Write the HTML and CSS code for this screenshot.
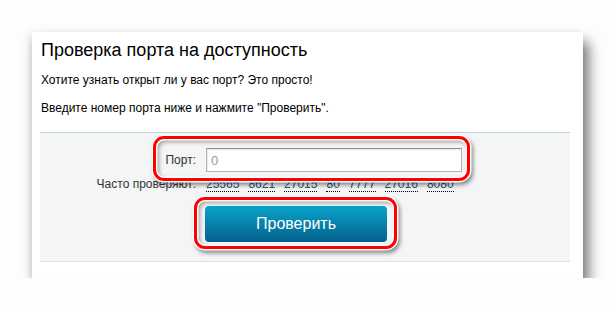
FILE: index.html
```html
<!DOCTYPE html>
<html>
<head>
    <title>Проверка порта на доступность</title>
    <link rel="stylesheet" href="styles.css">
</head>
<body>
    <div class="card">
        <h1>Проверка порта на доступность</h1>
        <p>Хотите узнать открыт ли у вас порт? Это просто!</p>
        <p>Введите номер порта ниже и нажмите "Проверить".</p>

        <form class="check-form">
            <label class="form-label" for="port">Порт:</label>
            <input class="port-input" type="text" id="port" value="0">

            <span class="form-label popular-label">Часто проверяют:</span>
            <div class="popular">
                <a href="#">25565</a>
                <a href="#">8621</a>
                <a href="#">27015</a>
                <a href="#">80</a>
                <a href="#">7777</a>
                <a href="#">27016</a>
                <a href="#">8080</a>
            </div>

            <div class="form-button">
                <button type="submit" class="check-btn">Проверить</button>
            </div>

            <!-- red marks over the screenshot -->
            <div class="mark mark-input"></div>
            <div class="mark mark-button"></div>
        </form>
    </div>
</body>
</html>
```

FILE: styles.css
```css
body {
    margin: 0;
    padding: 0;
    background-color: #fdfdfd;
    font-family: "Liberation Sans", Arial, sans-serif;
}

.card {
    width: 551px;
    margin: 32px 0 0 32px;
    padding: 7px 0 16px 0;
    box-sizing: border-box;
    background-color: #fff;
    box-shadow: 6px 10px 12px rgba(0, 0, 0, 0.5), -2px 2px 8px rgba(0, 0, 0, 0.12);
}

h1 {
    margin: 0 0 12px 9px;
    font-size: 18px;
    line-height: 22px;
    font-weight: normal;
    color: #000;
}

p {
    margin: 0 0 13px 9px;
    font-size: 12px;
    line-height: 15px;
    color: #000;
}

.check-form {
    position: relative;
    display: grid;
    grid-template-columns: 156px 1fr;
    column-gap: 10px;
    align-items: center;
    margin: 16px 13px 0 8px;
    padding: 15px 0 19px 0;
    background-color: #f3f5f6;
    border-top: 1px solid #c5d1d5;
    border-bottom: 1px solid #dce5e5;
}

.form-label {
    text-align: right;
    font-size: 12px;
    line-height: 15px;
    color: #333;
}

.port-input {
    width: 256px;
    height: 24px;
    box-sizing: border-box;
    padding: 0 4px;
    border: 1px solid #b3b3b3;
    border-top-color: #8f8f8f;
    box-shadow: inset 1px 1px 2px rgba(0, 0, 0, 0.1);
    font-family: "Liberation Sans", Arial, sans-serif;
    font-size: 13px;
    color: #999;
    background-color: #fff;
}

.popular-label,
.popular {
    margin-top: 5px;
}

.popular {
    display: flex;
    gap: 9px;
    font-size: 12px;
    line-height: 14px;
}

.popular a {
    color: #22527f;
    text-decoration: none;
    border-bottom: 1px dotted #000;
}

.form-button {
    grid-column: 2;
    margin-top: 14px;
    margin-left: -1px;
}

.check-btn {
    width: 182px;
    height: 36px;
    border: none;
    border-radius: 4px;
    background: linear-gradient(#0aa4ca, #03608c);
    color: #fff;
    font-family: "Liberation Sans", Arial, sans-serif;
    font-size: 16px;
    cursor: pointer;
}

.mark {
    position: absolute;
    box-sizing: border-box;
    border: 3px solid #f00;
    border-radius: 11px;
    box-shadow: 0 0 0 1.5px #fff, 2px 3px 4px 1px rgba(0, 0, 0, 0.45),
        inset 0 0 0 1.5px #fff, inset 2px 2px 4px 1px rgba(0, 0, 0, 0.35);
    pointer-events: none;
}

.mark-input {
    left: 113px;
    top: 3px;
    width: 317px;
    height: 45px;
}

.mark-button {
    left: 154px;
    top: 64px;
    width: 203px;
    height: 52px;
}
```
